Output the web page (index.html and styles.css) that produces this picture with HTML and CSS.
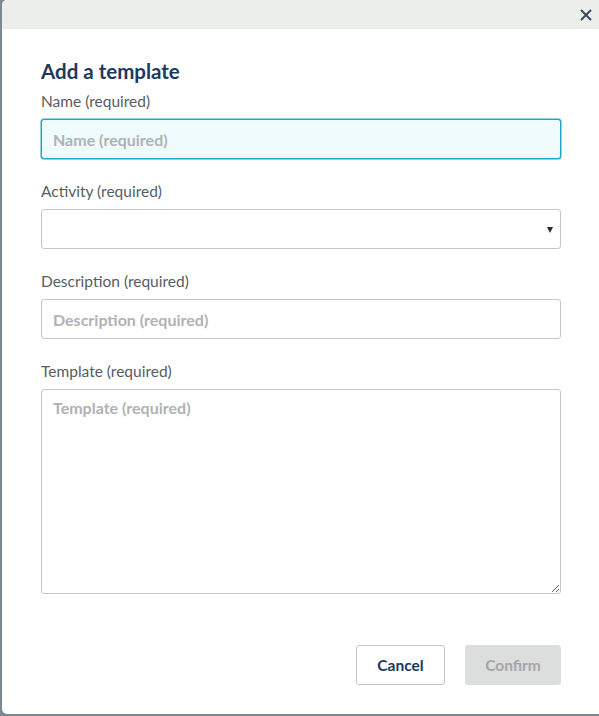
FILE: index.html
```html
<!DOCTYPE html>
<html>
<head>
<meta charset="utf-8">
<link rel="stylesheet" href="styles.css">
</head>
<body>
<div class="modal">
  <div class="modal-header">
    <svg class="close" width="12" height="12" viewBox="0 0 12 12" aria-label="Close">
      <path d="M1 1 L11 11 M11 1 L1 11" stroke="#3b4a5e" stroke-width="2" stroke-linecap="butt" fill="none"/>
    </svg>
  </div>
  <div class="modal-body">
    <h2 class="title">Add a template</h2>
    <div class="field">
      <label class="label">Name (required)</label>
      <input class="input focused" type="text" placeholder="Name (required)" autofocus>
    </div>
    <div class="field">
      <label class="label">Activity (required)</label>
      <div class="select">
        <span class="caret"></span>
      </div>
    </div>
    <div class="field">
      <label class="label">Description (required)</label>
      <input class="input" type="text" placeholder="Description (required)">
    </div>
    <div class="field">
      <label class="label">Template (required)</label>
      <textarea class="textarea" placeholder="Template (required)"></textarea>
    </div>
    <div class="actions">
      <button class="btn btn-cancel">Cancel</button>
      <button class="btn btn-confirm">Confirm</button>
    </div>
  </div>
</div>
</body>
</html>
```

FILE: styles.css
```css
html, body {
  margin: 0;
  padding: 0;
  height: 716px;
  overflow: hidden;
  background: #7d8792;
  font-family: "Source Sans Pro", Lato, "Liberation Sans", sans-serif;
}
.modal {
  margin-left: 2px;
  width: 620px;
  height: 714px;
  background: #fff;
  border-radius: 5px;
  overflow: hidden;
}
.modal-header {
  height: 29px;
  background: #eceeec;
  display: flex;
  justify-content: flex-end;
  align-items: center;
}
.close {
  margin-right: 30px;
  margin-top: 1px;
}
.modal-body {
  padding: 30px 0 0 39px;
  width: 520px;
}
.title {
  margin: 0 0 8px;
  font-size: 20.5px;
  line-height: 24px;
  font-weight: bold;
  color: #1b3a5e;
}
.field {
  display: flex;
  flex-direction: column;
  margin-bottom: 22px;
}
.label {
  font-size: 15.5px;
  line-height: 20px;
  color: #575c63;
  margin: 0 0 8px;
}
.input, .select, .textarea {
  box-sizing: border-box;
  width: 520px;
  height: 40px;
  border: 1px solid #c4c6c8;
  border-radius: 3px;
  background: #fff;
  font-family: inherit;
  font-size: 16px;
  padding: 0 11px;
  outline: none;
}
.input::placeholder, .textarea::placeholder {
  color: #b0b2b4;
  font-weight: bold;
}
.input.focused {
  border-color: #1ea7c6;
  background: #effbfd;
  box-shadow: 0 0 0 0.5px #1ea7c6;
}
.select {
  display: flex;
  justify-content: flex-end;
  align-items: center;
  padding-right: 7px;
}
.caret {
  width: 0;
  height: 0;
  border-left: 3px solid transparent;
  border-right: 3px solid transparent;
  border-top: 6px solid #1d2b3d;
  margin-top: 2px;
}
.textarea {
  height: 205px;
  padding-top: 8px;
  resize: vertical;
  display: block;
}
.actions {
  display: flex;
  justify-content: flex-end;
  gap: 20px;
  margin-top: 51px;
}
.btn {
  height: 40px;
  border-radius: 3px;
  font-family: inherit;
  font-size: 15.5px;
  font-weight: bold;
  padding: 0;
}
.btn-cancel {
  width: 89px;
  background: #fff;
  border: 1px solid #c4c6c8;
  color: #1b3a5e;
}
.btn-confirm {
  width: 96px;
  background: #dcdddd;
  border: 1px solid #dcdddd;
  color: #a4a6a8;
}
```
